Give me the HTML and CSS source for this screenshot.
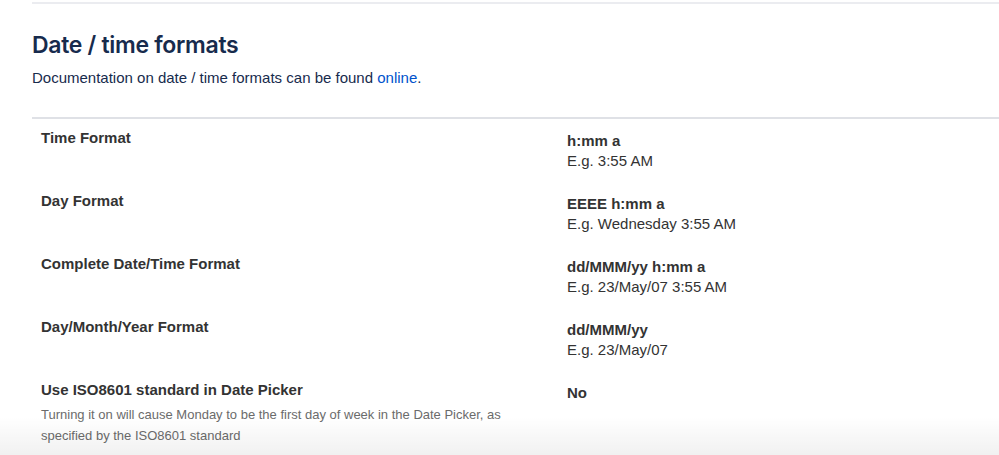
FILE: index.html
```html
<!DOCTYPE html>
<html lang="en">
<head>
<meta charset="UTF-8">
<title>Date / time formats</title>
<link rel="stylesheet" href="styles.css">
</head>
<body>

<div class="page">
  <div class="section">
    <h2>Date / time formats</h2>
    <p class="intro">Documentation on date / time formats can be found <a href="#">online</a>.</p>

    <div class="settings">
      <div class="row">
        <div class="label">Time Format</div>
        <div class="value">
          <div class="pattern">h:mm a</div>
          <div class="example">E.g. 3:55 AM</div>
        </div>
      </div>

      <div class="row">
        <div class="label">Day Format</div>
        <div class="value">
          <div class="pattern">EEEE h:mm a</div>
          <div class="example">E.g. Wednesday 3:55 AM</div>
        </div>
      </div>

      <div class="row">
        <div class="label">Complete Date/Time Format</div>
        <div class="value">
          <div class="pattern">dd/MMM/yy h:mm a</div>
          <div class="example">E.g. 23/May/07 3:55 AM</div>
        </div>
      </div>

      <div class="row">
        <div class="label">Day/Month/Year Format</div>
        <div class="value">
          <div class="pattern">dd/MMM/yy</div>
          <div class="example">E.g. 23/May/07</div>
        </div>
      </div>

      <div class="row">
        <div class="label">
          Use ISO8601 standard in Date Picker
          <div class="hint">Turning it on will cause Monday to be the first day of week in the Date Picker, as specified by the ISO8601 standard</div>
        </div>
        <div class="value">
          <div class="pattern">No</div>
        </div>
      </div>
    </div>
  </div>
  <div class="fade"></div>
</div>

</body>
</html>
```

FILE: styles.css
```css
body {
  margin: 0;
  font-family: "Liberation Sans", Arial, sans-serif;
  background: #fff;
  color: #333;
  overflow: hidden;
}

.page {
  position: relative;
  height: 455px;
  padding-left: 32px;
}

.section {
  border-top: 2px solid #ebecf0;
  margin-top: 2px;
}

h2 {
  margin: 26px 0 0;
  font-family: Inter, "Liberation Sans", sans-serif;
  font-size: 23px;
  font-weight: 600;
  letter-spacing: -0.3px;
  color: #172b4d;
  line-height: 30px;
}

.intro {
  margin: 8px 0 0;
  font-size: 15px;
  line-height: 20px;
  color: #172b4d;
}

.intro a {
  color: #0052cc;
  text-decoration: none;
}

.settings {
  margin-top: 29px;
  border-top: 2px solid #dfe1e6;
  padding-top: 9px;
}

.row {
  display: flex;
  min-height: 63px;
}

.label {
  width: 526px;
  padding-left: 9px;
  font-size: 15px;
  font-weight: bold;
  line-height: 20px;
  color: #333;
}

.value {
  padding-top: 3px;
  font-size: 15px;
  line-height: 20px;
  color: #333;
}

.pattern {
  font-weight: bold;
}

.hint {
  margin-top: 4px;
  font-size: 13px;
  font-weight: normal;
  line-height: 21px;
  color: #6b6b6b;
  width: 480px;
}

.fade {
  position: absolute;
  left: 0;
  right: 0;
  bottom: 0;
  height: 40px;
  background: linear-gradient(to bottom, rgba(0, 0, 0, 0), rgba(0, 0, 0, 0.06));
  pointer-events: none;
}
```
